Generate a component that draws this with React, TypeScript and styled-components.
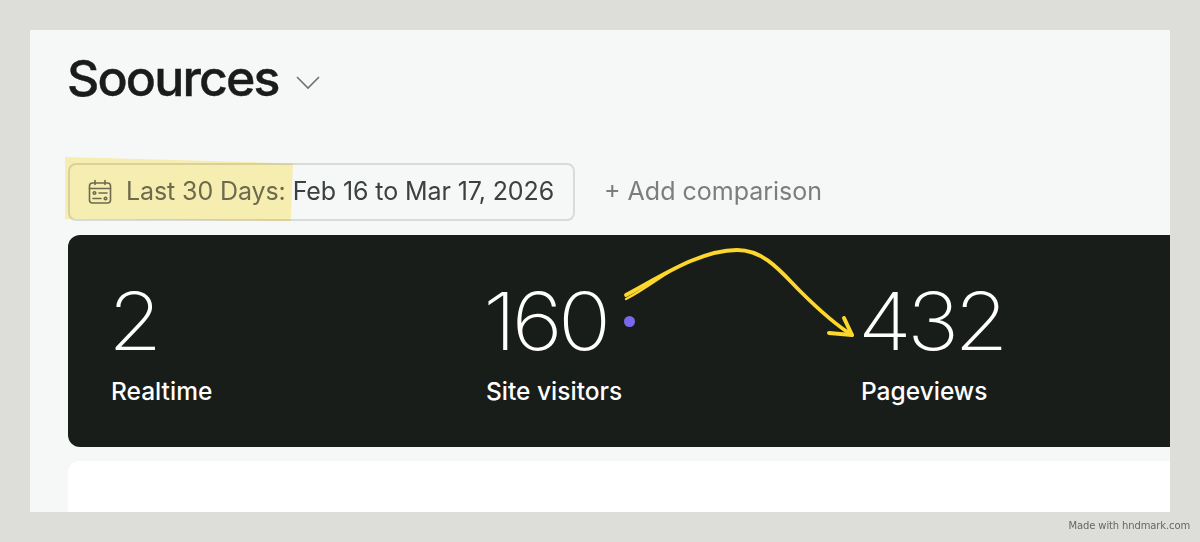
import React from 'react';
import styled, { createGlobalStyle } from 'styled-components';

const GlobalStyle = createGlobalStyle`
  html, body {
    margin: 0;
    padding: 0;
    background: #dddeda;
  }
  body {
    font-family: Inter, "Liberation Sans", sans-serif;
  }
`;

const Page = styled.div`
  width: 1200px;
  height: 542px;
  padding: 30px 30px 0;
  box-sizing: border-box;
  overflow: hidden;
`;

const Frame = styled.main`
  height: 482px;
  padding: 18px 0 0 38px;
  box-sizing: border-box;
  background: #f6f8f8;
  overflow: hidden;
`;

const TitleRow = styled.div`
  display: flex;
  align-items: center;
  gap: 16px;
  height: 58px;
`;

const Title = styled.h1`
  margin: 1px 0 0 -1px;
  font-size: 50px;
  line-height: 58px;
  font-weight: 500;
  letter-spacing: -1.85px;
  color: #191c1b;
  -webkit-text-stroke: 0.4px #191c1b;
`;

const Chevron = styled.svg`
  width: 26px;
  height: 16px;
  margin-top: 10px;
  fill: none;
  stroke: #6f7372;
  stroke-width: 1.6;
`;

const FilterRow = styled.div`
  position: relative;
  display: flex;
  align-items: center;
  gap: 29px;
  margin-top: 57px;
`;

const DateButton = styled.button`
  display: flex;
  align-items: center;
  gap: 14px;
  width: 507px;
  height: 58px;
  padding: 0 0 2px 18px;
  background: transparent;
  border: 2px solid #d9dbdb;
  border-radius: 8px;
  box-sizing: border-box;
  font: 400 25px Inter, "Liberation Sans", sans-serif;
  letter-spacing: -0.1px;
  color: #3c4040;
  white-space: nowrap;
`;

const RangeName = styled.span`
  color: #6d6f6b;
  margin-right: -7px;
`;

const CalendarIcon = styled.svg`
  flex: none;
  width: 24px;
  height: 26px;
  margin-top: 2px;
  fill: none;
  stroke: #6d6f6b;
  stroke-width: 1.6;
  stroke-linecap: round;
`;

const AddComparison = styled.span`
  margin-bottom: 2px;
  font-size: 25px;
  color: #7b7e7e;
  white-space: nowrap;
`;

const Highlight = styled.div`
  position: absolute;
  left: -3px;
  top: -6px;
  width: 228px;
  height: 64px;
  background: #fff4b6;
  clip-path: polygon(0 0, 100% 10%, 99% 100%, 0 97%);
  mix-blend-mode: multiply;
  pointer-events: none;
`;

const StatsPanel = styled.section`
  position: relative;
  display: flex;
  width: 1200px;
  height: 212px;
  margin-top: 14px;
  padding: 40px 0 0 43px;
  box-sizing: border-box;
  background: #191d1a;
  border-radius: 12px;
`;

const Stat = styled.div`
  width: 375px;
  color: #fff;
`;

const StatValue = styled.div`
  display: flex;
  align-items: center;
  gap: 29px;
  height: 92px;
  margin-left: -3px;
`;

const Digits = styled.span`
  display: inline-block;
  font-size: 80px;
  line-height: 92px;
  font-weight: 235;
  letter-spacing: -4.5px;
  transform: scaleX(1.1);
  transform-origin: left center;
`;

const StatLabel = styled.div`
  margin-top: 9px;
  font-size: 24.5px;
  line-height: 30px;
  font-weight: 450;
`;

const LiveDot = styled.span`
  width: 11px;
  height: 11px;
  margin-top: 1px;
  border-radius: 50%;
  background: #7a68f0;
`;

const ArrowMark = styled.svg`
  position: absolute;
  left: 532px;
  top: 5px;
  width: 260px;
  height: 100px;
  fill: none;
  stroke: #fdd72b;
  stroke-linecap: round;
  stroke-linejoin: round;
`;

const EmptyCard = styled.section`
  width: 1200px;
  height: 120px;
  margin-top: 14px;
  background: #fff;
  border-radius: 12px;
`;

const Credit = styled.footer`
  height: 30px;
  margin-right: -20px;
  font: 10px/28px "DejaVu Sans", sans-serif;
  letter-spacing: -0.13px;
  text-align: right;
  color: #666;
`;

const stats = [
  { value: '2', label: 'Realtime' },
  { value: '160', label: 'Site visitors', live: true },
  { value: '432', label: 'Pageviews' },
];

export default function App(): JSX.Element {
  return (
    <Page>
      <GlobalStyle />
      <Frame>
        <TitleRow>
          <Title>Soources</Title>
          <Chevron viewBox="0 0 26 16">
            <polyline points="2,3 13,14 24,3" />
          </Chevron>
        </TitleRow>
        <FilterRow>
          <DateButton>
            <CalendarIcon viewBox="0 0 24 26">
              <rect x="1.5" y="4" width="21" height="20" rx="3" />
              <path d="M7 1.5v4M17 1.5v4M1.5 9.5h21" />
              <circle cx="6.5" cy="14" r="1.3" />
              <path d="M11 14h8M5 19.5h8" />
              <circle cx="17.5" cy="19.5" r="1.3" />
            </CalendarIcon>
            <RangeName>Last 30 Days:</RangeName> Feb 16 to Mar 17, 2026
          </DateButton>
          <AddComparison>+ Add comparison</AddComparison>
          <Highlight />
        </FilterRow>
        <StatsPanel>
          {stats.map(stat => (
            <Stat key={stat.label}>
              <StatValue>
                <Digits>{stat.value}</Digits>
                {stat.live && <LiveDot />}
              </StatValue>
              <StatLabel>{stat.label}</StatLabel>
            </Stat>
          ))}
          <ArrowMark viewBox="600 240 260 100">
            <path strokeWidth="3.8" d="M626 295C660 277 700 250 737 250C765 250 782 273 800 291C818 309 836 325 852 335" />
            <path strokeWidth="2.4" d="M626 299C640 292 655 281 669 272" />
            <path strokeWidth="4" d="M829 333L852 335L844 318" />
          </ArrowMark>
        </StatsPanel>
        <EmptyCard />
      </Frame>
      <Credit>Made with hndmark.com</Credit>
    </Page>
  );
}
